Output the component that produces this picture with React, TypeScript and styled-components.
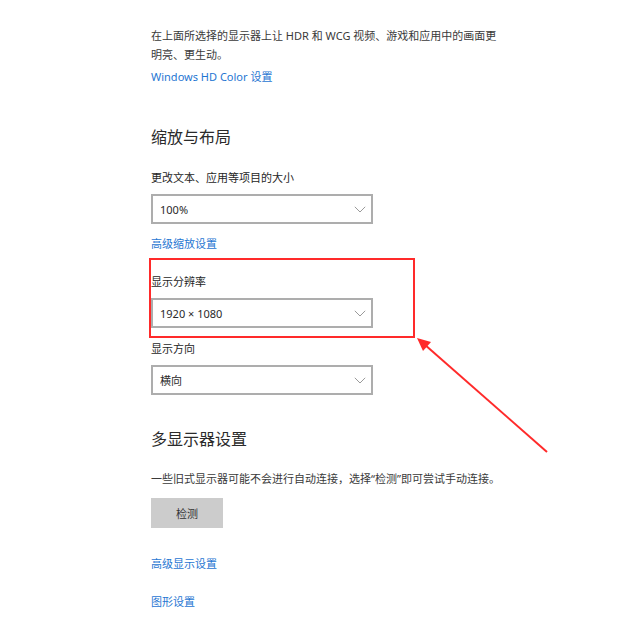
import React from "react";
import styled, { createGlobalStyle } from "styled-components";

const Global = createGlobalStyle`
  html, body { margin: 0; padding: 0; background: #fff; }
  body { font-family: "Noto Sans", "Noto Sans CJK SC", sans-serif; }
`;

const Page = styled.div`
  position: relative;
  width: 620px;
  height: 620px;
  overflow: hidden;
  background: #fff;
  box-sizing: border-box;
  padding: 26px 0 0 151px;
  display: flex;
  flex-direction: column;
  align-items: flex-start;
  & > * { flex-shrink: 0; }
`;

const Desc = styled.p<{ $mt?: number; $w: number }>`
  margin: ${(p) => p.$mt ?? 0}px 0 0 0;
  width: ${(p) => p.$w}px;
  font-size: 11px;
  line-height: 19px;
  color: #3a3a3a;
`;

const Link = styled.a<{ $mt: number }>`
  display: block;
  margin-top: ${(p) => p.$mt}px;
  font-size: 11px;
  line-height: 19px;
  color: #1f76d2;
  text-decoration: none;
  cursor: pointer;
`;

const Heading = styled.h2<{ $mt: number }>`
  margin: ${(p) => p.$mt}px 0 0 0;
  font-size: 16px;
  font-weight: 400;
  line-height: 24px;
  color: #2b2b2b;
`;

const Label = styled.div<{ $mt: number }>`
  margin-top: ${(p) => p.$mt}px;
  font-size: 11px;
  line-height: 19px;
  color: #262626;
`;

const Select = styled.div`
  margin-top: 7px;
  width: 222px;
  height: 30px;
  box-sizing: border-box;
  border: 2px solid #adadad;
  background: #fff;
  display: flex;
  align-items: center;
  justify-content: space-between;
  padding: 0 5px 0 7px;
  font-size: 11px;
  color: #2a2a2a;
`;

const Highlight = styled.div`
  margin: 5px 0 0 -2px;
  width: 266px;
  height: 80px;
  box-sizing: border-box;
  border: 2px solid #ff2a2a;
  padding: 12px 0 0 0;
  display: flex;
  flex-direction: column;
  align-items: flex-start;
`;

const Button = styled.button`
  margin-top: 10px;
  width: 72px;
  height: 30px;
  border: none;
  background: #cccccc;
  font-family: inherit;
  font-size: 11px;
  color: #333;
  padding: 0;
`;

const Overlay = styled.svg`
  position: absolute;
  left: 0;
  top: 0;
  pointer-events: none;
`;

const Chevron = () => (
  <svg width="12" height="7" viewBox="0 0 12 7">
    <path d="M0.8 0.8 L6 6 L11.2 0.8" fill="none" stroke="#9a9a9a" strokeWidth="1" />
  </svg>
);

const Dropdown = ({ value }: { value: string }) => (
  <Select>
    <span>{value}</span>
    <Chevron />
  </Select>
);

export default function App() {
  return (
    <Page>
      <Global />
      <Desc $w={352}>在上面所选择的显示器上让 HDR 和 WCG 视频、游戏和应用中的画面更明亮、更生动。</Desc>
      <Link $mt={3}>Windows HD Color 设置</Link>

      <Heading $mt={39}>缩放与布局</Heading>
      <Label $mt={19}>更改文本、应用等项目的大小</Label>
      <Dropdown value="100%" />
      <Link $mt={10}>高级缩放设置</Link>

      <Highlight>
        <Label $mt={0}>显示分辨率</Label>
        <Dropdown value="1920 × 1080" />
      </Highlight>

      <Label $mt={1}>显示方向</Label>
      <Dropdown value="横向" />

      <Heading $mt={32}>多显示器设置</Heading>
      <Desc $mt={18} $w={380}>一些旧式显示器可能不会进行自动连接，选择“检测”即可尝试手动连接。</Desc>
      <Button>检测</Button>

      <Link $mt={26}>高级显示设置</Link>
      <Link $mt={19}>图形设置</Link>

      <Overlay width="620" height="620" viewBox="0 0 620 620">
        <line x1="547" y1="452" x2="424" y2="344" stroke="#ff2a2a" strokeWidth="2" />
        <polygon points="417,338 431,342 423,351" fill="#ff2a2a" />
      </Overlay>
    </Page>
  );
}
